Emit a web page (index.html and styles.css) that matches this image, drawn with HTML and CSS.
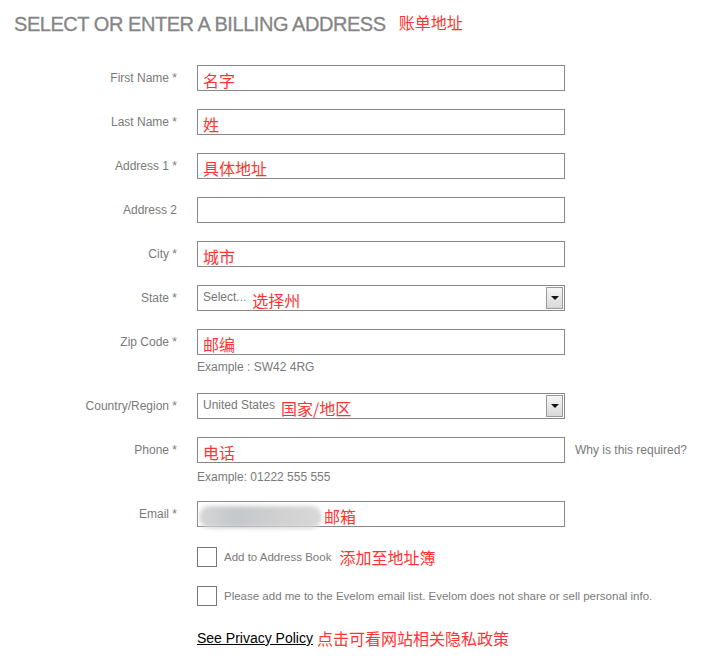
FILE: index.html
```html
<!DOCTYPE html>
<html lang="en">
<head>
    <meta charset="UTF-8">
    <title>Billing Address</title>
    <link rel="stylesheet" href="styles.css">
</head>
<body>
    <h1 class="title">SELECT OR ENTER A BILLING ADDRESS <span class="note note-title">账单地址</span></h1>

    <form class="address-form">
        <label class="label">First Name *</label>
        <div class="field"><span class="note">名字</span></div>
        <div></div>

        <label class="label">Last Name *</label>
        <div class="field"><span class="note">姓</span></div>
        <div></div>

        <label class="label">Address 1 *</label>
        <div class="field"><span class="note">具体地址</span></div>
        <div></div>

        <label class="label">Address 2</label>
        <div class="field"></div>
        <div></div>

        <label class="label">City *</label>
        <div class="field"><span class="note">城市</span></div>
        <div></div>

        <label class="label">State *</label>
        <div class="field select">
            <span class="value">Select...</span><span class="note">选择州</span>
            <span class="arrow"></span>
        </div>
        <div></div>

        <label class="label">Zip Code *</label>
        <div class="field-wrap">
            <div class="field"><span class="note">邮编</span></div>
            <div class="hint">Example : SW42 4RG</div>
        </div>
        <div></div>

        <label class="label">Country/Region *</label>
        <div class="field select">
            <span class="value">United States</span><span class="note">国家/地区</span>
            <span class="arrow"></span>
        </div>
        <div></div>

        <label class="label">Phone *</label>
        <div class="field-wrap">
            <div class="field"><span class="note">电话</span></div>
            <div class="hint hint-phone">Example: 01222 555 555</div>
        </div>
        <div class="aside">Why is this required?</div>

        <label class="label">Email *</label>
        <div class="field email"><span class="blur"></span><span class="note">邮箱</span></div>
        <div></div>

        <div></div>
        <div class="check-row">
            <span class="box"></span>
            <span class="check-text">Add to Address Book</span>
            <span class="note">添加至地址簿</span>
        </div>
        <div></div>

        <div></div>
        <div class="check-row check-wide">
            <span class="box"></span>
            <span class="check-text">Please add me to the Evelom email list. Evelom does not share or sell personal info.</span>
        </div>

        <div></div>
        <div class="privacy">
            <a href="#" class="link">See Privacy Policy</a>
            <span class="note">点击可看网站相关隐私政策</span>
        </div>
        <div></div>
    </form>
</body>
</html>
```

FILE: styles.css
```css
body {
    margin: 0;
    padding: 0;
    background: #fff;
    font-family: "Liberation Sans", Arial, "Noto Sans CJK SC", sans-serif;
}

.title {
    margin: 0;
    padding: 10px 0 0 14px;
    font-size: 20px;
    font-weight: normal;
    letter-spacing: -0.45px;
    color: #858585;
    -webkit-text-stroke: 0.3px #858585;
    height: 65px;
    box-sizing: border-box;
}

.note {
    color: #f33;
    font-family: "Noto Sans CJK SC", sans-serif;
    font-size: 16px;
    letter-spacing: 0;
}

.note-title {
    margin-left: 8px;
    vertical-align: 2px;
    -webkit-text-stroke: 0;
}

.address-form {
    display: grid;
    grid-template-columns: 177px 368px auto;
    column-gap: 20px;
    row-gap: 18px;
    align-items: start;
}

.label {
    text-align: right;
    font-size: 12px;
    color: #7a7a7a;
    padding-top: 6px;
}

.field {
    height: 26px;
    box-sizing: border-box;
    border: 1px solid #888;
    display: flex;
    align-items: center;
    padding-left: 5px;
}

.field .note {
    padding-top: 3px;
}

.value {
    font-size: 12px;
    color: #777;
    margin-right: 6px;
    padding-bottom: 2px;
}

.arrow {
    margin-left: auto;
    margin-right: 1px;
    width: 17px;
    height: 22px;
    box-sizing: border-box;
    border: 1px solid #999;
    background: linear-gradient(#f6f6f6, #d8d8d8);
    display: flex;
    align-items: center;
    justify-content: center;
}

.arrow::after {
    content: "";
    border-left: 4px solid transparent;
    border-right: 4px solid transparent;
    border-top: 4px solid #111;
}

.hint {
    font-size: 12px;
    color: #7a7a7a;
    margin-top: 5px;
    height: 15px;
}

.hint-phone {
    margin-top: 7px;
    height: 13px;
}

.aside {
    font-size: 12px;
    color: #7a7a7a;
    padding-top: 6px;
    margin-left: -10px;
    white-space: nowrap;
}

.email {
    padding-left: 1px;
}

.blur {
    width: 123px;
    height: 22px;
    margin-top: 6px;
    border-radius: 11px;
    background: linear-gradient(90deg, #d6d6d6, #c4c8cc 30%, #cfcfcf 60%, #d8d8d8);
    filter: blur(2px);
    margin-right: 2px;
}

.check-row {
    display: flex;
    align-items: center;
    height: 20px;
    margin-top: 2px;
}

.check-wide {
    grid-column: 2 / 4;
    margin-top: 1px;
}

.box {
    width: 20px;
    height: 20px;
    box-sizing: border-box;
    border: 1px solid #777;
    margin-right: 7px;
    flex-shrink: 0;
}

.check-text {
    font-size: 11.5px;
    color: #7a7a7a;
    margin-right: 8px;
    white-space: nowrap;
}

.privacy {
    display: flex;
    align-items: center;
    margin-top: 2px;
}

.link {
    color: #000;
    font-size: 14px;
    text-decoration: underline;
    margin-right: 4px;
}
```
